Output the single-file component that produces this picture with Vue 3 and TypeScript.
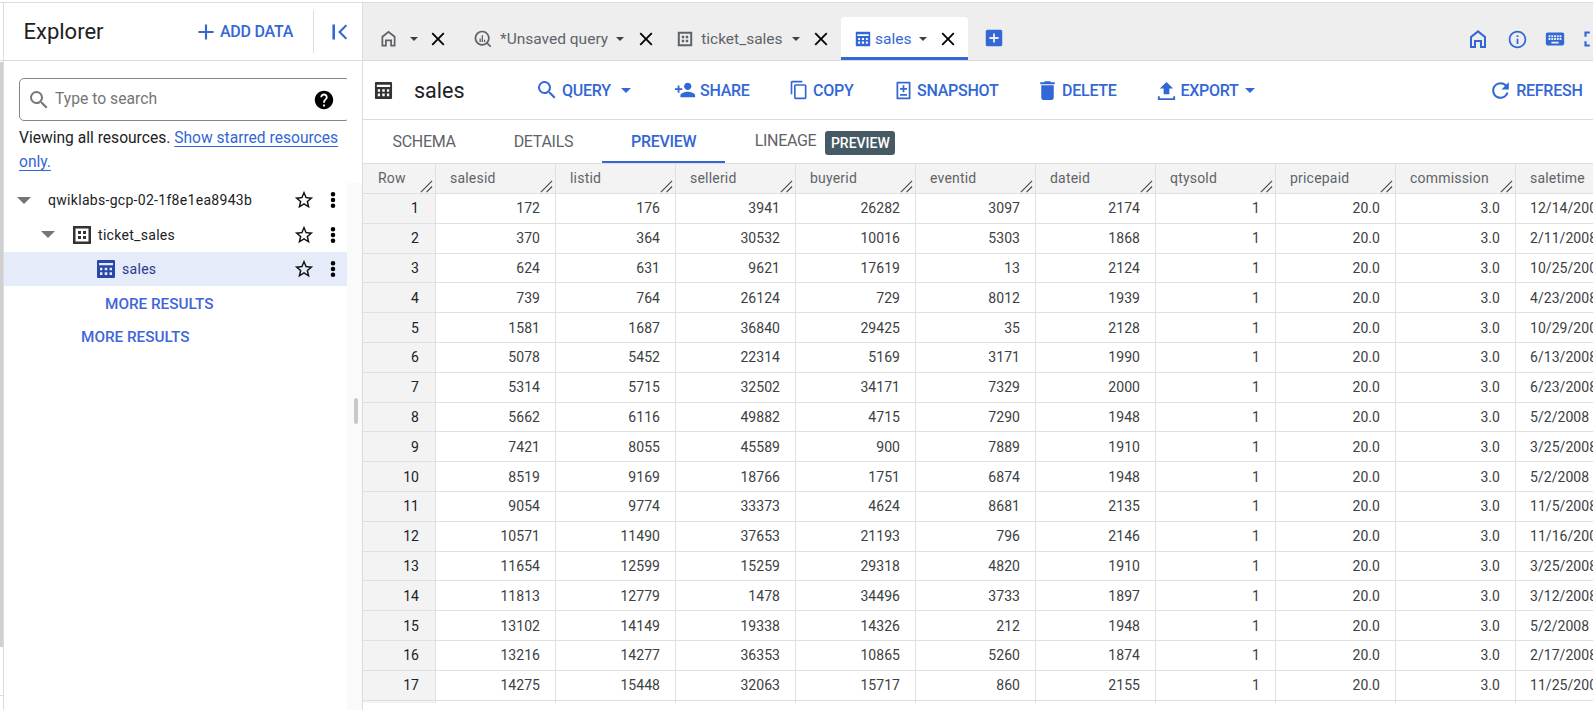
<template>
  <div class="page">
    <div class="shell">
      <div class="rail">
        <div class="rail-top"></div>
        <div class="rail-thumb"></div>
        <div class="rail-bottom"></div>
      </div>

      <aside class="explorer">
        <div class="explorer-head">
          <span class="explorer-title">Explorer</span>
          <button class="add-data">
            <svg width="26" height="26" viewBox="0 0 24 24"><path d="M19 13h-6v6h-2v-6H5v-2h6V5h2v6h6v2z" /></svg>
            ADD DATA
          </button>
          <span class="head-divider"></span>
          <button class="collapse">
            <svg width="26" height="26" viewBox="0 0 24 24"><path d="M5 5h2.400v14H5zM18.600 6.400 17.200 5l-7 7 7 7 1.400-1.400L13 12z" /></svg>
          </button>
        </div>

        <div class="explorer-body">
          <div class="search">
            <svg class="search-icon" width="24" height="24" viewBox="0 0 24 24"><path d="M15.500 14h-.79l-.28-.27A6.470 6.470 0 0 0 16 9.500 6.500 6.500 0 1 0 9.500 16c1.610 0 3.090-.59 4.230-1.570l.27.28v.79l5 4.990L20.490 19l-4.990-5zm-6 0C7.010 14 5 11.990 5 9.500S7.010 5 9.500 5 14 7.010 14 9.500 11.990 14 9.500 14z" /></svg>
            <span class="search-text">Type to search</span>
            <svg class="help-icon" width="22" height="22" viewBox="0 0 24 24"><path d="M12 2C6.480 2 2 6.480 2 12s4.480 10 10 10 10-4.480 10-10S17.520 2 12 2zm1 17h-2v-2h2v2zm2.070-7.750-.9.920C13.450 12.900 13 13.500 13 15h-2v-.5c0-1.100.45-2.100 1.170-2.830l1.240-1.260c.37-.36.59-.86.59-1.410 0-1.100-.9-2-2-2s-2 .9-2 2H8c0-2.210 1.790-4 4-4s4 1.790 4 4c0 .88-.36 1.680-.93 2.250z" /></svg>
          </div>
          <p class="viewing">Viewing all resources. <a class="starred">Show starred resources only.</a></p>
        </div>

        <div class="tree">
          <div class="tree-row">
            <span class="caret caret-project"></span>
            <span class="node-label project-label">qwiklabs-gcp-02-1f8e1ea8943b</span>
            <svg class="star" width="22" height="22" viewBox="0 0 24 24"><path :d="starPath" /></svg>
            <svg class="dots" width="24" height="24" viewBox="0 0 24 24"><path :d="dotsPath" /></svg>
          </div>
          <div class="tree-row">
            <span class="caret caret-dataset"></span>
            <svg class="dataset-icon" width="20" height="20" viewBox="0 0 20 20"><path :d="datasetPath" /></svg>
            <span class="node-label">ticket_sales</span>
            <svg class="star" width="22" height="22" viewBox="0 0 24 24"><path :d="starPath" /></svg>
            <svg class="dots" width="24" height="24" viewBox="0 0 24 24"><path :d="dotsPath" /></svg>
          </div>
          <div class="tree-row selected">
            <svg class="table-icon" width="20" height="20" viewBox="0 0 20 20"><path :d="tablePath" /></svg>
            <span class="node-label">sales</span>
            <svg class="star" width="22" height="22" viewBox="0 0 24 24"><path :d="starPath" /></svg>
            <svg class="dots" width="24" height="24" viewBox="0 0 24 24"><path :d="dotsPath" /></svg>
          </div>
          <div class="more more-inner">MORE RESULTS</div>
          <div class="more more-outer">MORE RESULTS</div>
        </div>
      </aside>

      <div class="gutter">
        <div class="gutter-head"></div>
        <div class="gutter-gap"></div>
        <div class="gutter-fill">
          <span class="handle"></span>
        </div>
      </div>

      <main class="main">
        <div class="tabbar">
          <div v-for="tab in tabs" :key="tab.key" class="tab" :class="[tab.key, { active: tab.active }]">
            <svg v-if="tab.key === 'home'" class="tab-icon" width="21" height="21" viewBox="0 0 24 24"><path :d="homePath" /></svg>
            <svg v-else-if="tab.key === 'query'" class="tab-icon" width="20" height="20" viewBox="0 0 24 24"><path d="M11 2a9 9 0 1 0 5.600 16l4 4 1.400-1.400-4-4A9 9 0 0 0 11 2zm0 2a7 7 0 1 1 0 14 7 7 0 0 1 0-14zm-.6 3.500v8h1.600v-8h-1.600zm-2.600 4v4h1.600v-4H7.800zm5.300 1.500v2.500h1.600V13h-1.600z" /></svg>
            <svg v-else-if="tab.key === 'dataset'" class="tab-icon" width="16" height="16" viewBox="0 0 20 20"><path :d="datasetPath" /></svg>
            <svg v-else class="tab-icon" width="16" height="16" viewBox="0 0 20 20"><path :d="tablePath" /></svg>
            <span v-if="tab.label" class="tab-label">{{ tab.label }}</span>
            <span class="tab-caret"></span>
            <svg class="tab-close" width="22" height="22" viewBox="0 0 24 24"><path d="M19 6.400 17.600 5 12 10.600 6.400 5 5 6.400 10.600 12 5 17.600 6.400 19 12 13.400 17.600 19 19 17.600 13.400 12z" /></svg>
          </div>
          <svg class="new-tab" width="22" height="22" viewBox="0 0 24 24"><path d="M19 3H5a2 2 0 0 0-2 2v14a2 2 0 0 0 2 2h14a2 2 0 0 0 2-2V5a2 2 0 0 0-2-2zm-2 10h-4v4h-2v-4H7v-2h4V7h2v4h4v2z" /></svg>
          <div class="tabbar-icons">
            <svg width="24" height="24" viewBox="0 0 24 24"><path :d="homePath" /></svg>
            <svg width="21" height="21" viewBox="0 0 24 24"><path d="M11 7h2v2h-2zm0 4h2v6h-2zm1-9C6.480 2 2 6.480 2 12s4.480 10 10 10 10-4.480 10-10S17.520 2 12 2zm0 18c-4.410 0-8-3.590-8-8s3.590-8 8-8 8 3.590 8 8-3.590 8-8 8z" /></svg>
            <svg width="22" height="22" viewBox="0 0 24 24"><path d="M20 5H4c-1.100 0-2 .9-2 2v10c0 1.100.9 2 2 2h16c1.100 0 2-.9 2-2V7c0-1.100-.9-2-2-2zm-9 3h2v2h-2V8zm0 3h2v2h-2v-2zM8 8h2v2H8V8zm0 3h2v2H8v-2zm-1 2H5v-2h2v2zm0-3H5V8h2v2zm9 7H8v-2h8v2zm0-4h-2v-2h2v2zm0-3h-2V8h2v2zm3 3h-2v-2h2v2zm0-3h-2V8h2v2z" /></svg>
            <svg width="26" height="26" viewBox="0 0 24 24"><path d="M7 14H5v5h5v-2H7v-3zm-2-4h2V7h3V5H5v5zm12 7h-3v2h5v-5h-2v3zM14 5v2h3v3h2V5h-5z" /></svg>
          </div>
        </div>

        <div class="toolbar">
          <svg class="title-icon" width="19" height="19" viewBox="0 0 20 20"><path :d="tablePath" /></svg>
          <span class="title">sales</span>
          <button v-for="action in actions" :key="action.label" class="action" :class="action.cls">
            <svg :width="action.size" :height="action.size" viewBox="0 0 24 24"><path :d="action.icon" /></svg>
            {{ action.label }}
            <span v-if="action.menu" class="action-caret"></span>
          </button>
          <button class="action refresh">
            <svg width="25" height="25" viewBox="0 0 24 24"><path d="M17.650 6.350A7.958 7.958 0 0 0 12 4c-4.420 0-7.990 3.580-7.990 8s3.570 8 7.990 8c3.730 0 6.840-2.550 7.730-6h-2.080A5.990 5.990 0 0 1 12 18c-3.310 0-6-2.690-6-6s2.690-6 6-6c1.660 0 3.140.69 4.220 1.780L13 11h7V4l-2.350 2.350z" /></svg>
            REFRESH
          </button>
        </div>

        <div class="subtabs">
          <span class="subtab schema">SCHEMA</span>
          <span class="subtab details">DETAILS</span>
          <span class="subtab preview">PREVIEW</span>
          <span class="subtab lineage">LINEAGE</span>
          <span class="badge">PREVIEW</span>
        </div>

        <div class="grid-wrap">
          <table class="grid">
            <thead>
              <tr>
                <th v-for="col in columns" :key="col" :class="{ 'row-col': col === 'Row' }">
                  {{ col }}
                  <svg class="resize" width="13" height="13" viewBox="0 0 14 14"><path d="M1 13 13 1M7 13l6-6" /></svg>
                </th>
              </tr>
            </thead>
            <tbody>
              <tr v-for="(row, i) in rows" :key="i">
                <td class="row-col">{{ i + 1 }}</td>
                <td v-for="(cell, j) in row" :key="j" :class="{ 'date-col': j === 9 }">{{ cell }}</td>
              </tr>
              <!-- next row, only its top few pixels are visible -->
              <tr>
                <td class="row-col"></td>
                <td v-for="n in 10" :key="n"></td>
              </tr>
            </tbody>
          </table>
        </div>
      </main>
    </div>
  </div>
</template>

<script setup lang="ts">
const starPath = 'M22 9.240l-7.190-.62L12 2 9.190 8.630 2 9.240l5.460 4.730L5.820 21 12 17.270 18.180 21l-1.630-7.030L22 9.240zM12 15.400l-3.760 2.270 1-4.280-3.320-2.880 4.380-.38L12 6.100l1.710 4.040 4.380.38-3.320 2.880 1 4.280L12 15.400z'
const dotsPath = 'M12 8.600a2.300 2.300 0 1 0 0-4.600 2.300 2.300 0 0 0 0 4.600zm0 1.100a2.300 2.300 0 1 0 0 4.600 2.300 2.300 0 0 0 0-4.600zm0 5.700a2.300 2.300 0 1 0 0 4.600 2.300 2.300 0 0 0 0-4.600z'
const datasetPath = 'M1 1h18v18H1V1zm2.500 2.500v13h13v-13h-13zM6 6h3v3H6V6zm5 0h3v3h-3V6zm-5 5h3v3H6v-3zm5 0h3v3h-3v-3z'
// frame, a white bar on top, then two rows of three cells
const tablePath = 'M2 1h16a1 1 0 0 1 1 1v16a1 1 0 0 1-1 1H2a1 1 0 0 1-1-1V2a1 1 0 0 1 1-1zm1 3v2.300h14V4H3zm1 4.700v2.600h2.400V8.700H4zm4.700 0v2.600h2.600V8.700H8.700zm4.900 0v2.600H16V8.700h-2.400zM4 13.200v2.800h2.400v-2.800H4zm4.700 0v2.800h2.600v-2.800H8.700zm4.900 0v2.800H16v-2.800h-2.400z'
const homePath = 'M12 3 4 9.500V21h6v-6h4v6h6V9.500L12 3zm6 16h-2v-6H8v6H6v-8.500l6-4.700 6 4.700V19z'

const tabs = [
  { key: 'home', label: '', active: false },
  { key: 'query', label: '*Unsaved query', active: false },
  { key: 'dataset', label: 'ticket_sales', active: false },
  { key: 'table', label: 'sales', active: true },
]

const actions = [
  { label: 'QUERY', cls: 'a-query', menu: true, size: 24, icon: 'M15.500 14h-.79l-.28-.27A6.470 6.470 0 0 0 16 9.500 6.500 6.500 0 1 0 9.500 16c1.610 0 3.090-.59 4.230-1.570l.27.28v.79l5 4.990L20.490 19l-4.990-5zm-6 0C7.010 14 5 11.990 5 9.500S7.010 5 9.500 5 14 7.010 14 9.500 11.990 14 9.500 14z' },
  { label: 'SHARE', cls: 'a-share', menu: false, size: 22, icon: 'M15 12c2.210 0 4-1.790 4-4s-1.790-4-4-4-4 1.790-4 4 1.790 4 4 4zm-9-2V7H4v3H1v2h3v3h2v-3h3v-2H6zm9 4c-2.670 0-8 1.340-8 4v2h16v-2c0-2.660-5.330-4-8-4z' },
  { label: 'COPY', cls: 'a-copy', menu: false, size: 20, icon: 'M16 1H4c-1.100 0-2 .9-2 2v14h2V3h12V1zm3 4H8c-1.100 0-2 .9-2 2v14c0 1.100.9 2 2 2h11c1.100 0 2-.9 2-2V7c0-1.100-.9-2-2-2zm0 16H8V7h11v14z' },
  { label: 'SNAPSHOT', cls: 'a-snapshot', menu: false, size: 21, icon: 'M5 2h14a1 1 0 0 1 1 1v18a1 1 0 0 1-1 1H5a1 1 0 0 1-1-1V3a1 1 0 0 1 1-1zm1 2v16h12V4H6zm5 2h2v3h3v2h-3v3h-2v-3H8V9h3V6zm-3 10h8v2H8v-2z' },
  { label: 'DELETE', cls: 'a-delete', menu: false, size: 25, icon: 'M6 19c0 1.100.9 2 2 2h8c1.100 0 2-.9 2-2V7H6v12zM19 4h-3.500l-1-1h-5l-1 1H5v2h14V4z' },
  { label: 'EXPORT', cls: 'a-export', menu: true, size: 23, icon: 'M9 16h6v-6h4l-7-7-7 7h4v6zm-6 2h2v2h14v-2h2v4H3v-4z' },
]

const columns = ['Row', 'salesid', 'listid', 'sellerid', 'buyerid', 'eventid', 'dateid', 'qtysold', 'pricepaid', 'commission', 'saletime']

// salesid, listid, sellerid, buyerid, eventid, dateid, then the saletime that gets clipped at the window edge
const rawRows: [number, number, number, number, number, number, string][] = [
  [172, 176, 3941, 26282, 3097, 2174, '12/14/2008'],
  [370, 364, 30532, 10016, 5303, 1868, '2/11/2008'],
  [624, 631, 9621, 17619, 13, 2124, '10/25/2008'],
  [739, 764, 26124, 729, 8012, 1939, '4/23/2008'],
  [1581, 1687, 36840, 29425, 35, 2128, '10/29/2008'],
  [5078, 5452, 22314, 5169, 3171, 1990, '6/13/2008'],
  [5314, 5715, 32502, 34171, 7329, 2000, '6/23/2008'],
  [5662, 6116, 49882, 4715, 7290, 1948, '5/2/2008'],
  [7421, 8055, 45589, 900, 7889, 1910, '3/25/2008'],
  [8519, 9169, 18766, 1751, 6874, 1948, '5/2/2008'],
  [9054, 9774, 33373, 4624, 8681, 2135, '11/5/2008'],
  [10571, 11490, 37653, 21193, 796, 2146, '11/16/2008'],
  [11654, 12599, 15259, 29318, 4820, 1910, '3/25/2008'],
  [11813, 12779, 1478, 34496, 3733, 1897, '3/12/2008'],
  [13102, 14149, 19338, 14326, 212, 1948, '5/2/2008'],
  [13216, 14277, 36353, 10865, 5260, 1874, '2/17/2008'],
  [14275, 15448, 32063, 15717, 860, 2155, '11/25/2008'],
]

const rows = rawRows.map((r) => [r[0], r[1], r[2], r[3], r[4], r[5], 1, '20.0', '3.0', r[6]])
</script>

<style>
html,
body {
  margin: 0;
  overflow: hidden;
  background: #fff;
}
</style>

<style scoped>
.page {
  width: 1593px;
  height: 710px;
  overflow: hidden;
  box-sizing: border-box;
  padding-top: 2px;
  font-family: Roboto, "Liberation Sans", sans-serif;
  color: #202124;
}

.shell {
  display: flex;
  height: 708px;
  box-sizing: border-box;
  border-top: 1px solid #dadce0;
}

button {
  font-family: inherit;
  border: none;
  background: none;
  padding: 0;
  display: inline-flex;
  align-items: center;
  flex-shrink: 0;
}

/* Browser scrollbar sliver on the far left */
.rail {
  width: 4px;
  flex-shrink: 0;
  box-sizing: border-box;
  border-right: 1px solid #dadce0;
}

.rail-top {
  height: 57px;
  border-bottom: 1px solid #dadce0;
}

.rail-thumb {
  height: 585px;
  margin-top: 1px;
  background: #d0d0d0;
}

.rail-bottom {
  margin-top: 48px;
  border-top: 1px solid #dadce0;
}

/* Explorer panel */
.explorer {
  width: 343px;
  flex-shrink: 0;
  overflow: hidden;
}

.explorer-head {
  height: 57px;
  display: flex;
  align-items: center;
  padding-left: 19.500px;
  border-bottom: 1px solid #dadce0;
}

.explorer-title {
  font-size: 22px;
  width: 169px;
  flex-shrink: 0;
}

.add-data {
  color: #3367d6;
  font-size: 16px;
  font-weight: 500;
  letter-spacing: -0.25px;
  gap: 1.500px;
  width: 120.400px;
}

.add-data svg,
.collapse svg {
  fill: #3367d6;
}

.head-divider {
  width: 1px;
  height: 43px;
  background: #dadce0;
  flex-shrink: 0;
}

.collapse {
  margin-left: 13.600px;
}

.explorer-body {
  padding: 17px 0 0 15px;
}

.search {
  height: 43px;
  display: flex;
  align-items: center;
  border: 1px solid #80868b;
  border-radius: 5px;
  box-sizing: border-box;
  margin-right: -3px;
  padding-left: 7px;
}

.search-icon {
  fill: #757575;
  flex-shrink: 0;
}

.search-text {
  margin-left: 4px;
  margin-bottom: 2px;
  font-size: 15.700px;
  color: #757575;
  flex: 1;
}

.help-icon {
  fill: #000;
  margin-right: 14px;
}

.viewing {
  margin: 5px 0 0;
  font-size: 15.600px;
  line-height: 24px;
  width: 326px;
}

.starred {
  color: #3367d6;
  text-decoration: underline;
  text-underline-offset: 3px;
}

.tree {
  margin-top: 9px;
}

.tree-row {
  height: 34.400px;
  display: flex;
  align-items: center;
  font-size: 14px;
  letter-spacing: 0.3px;
}

.tree-row.selected {
  background: #e5ebf8;
  color: #2a3a8c;
}

.node-label {
  flex: 1;
}

.project-label {
  margin-left: 17px;
}

.caret {
  width: 0;
  height: 0;
  border-left: 7px solid transparent;
  border-right: 7px solid transparent;
  border-top: 7px solid #757575;
  flex-shrink: 0;
}

.caret-project {
  margin-left: 13px;
}

.caret-dataset {
  margin-left: 37px;
}

.dataset-icon {
  margin-left: 17px;
  margin-right: 6px;
  fill: #333;
}

.table-icon {
  fill: #2a46ab;
  margin-left: 92px;
  margin-right: 6px;
}

.star {
  fill: #111;
  margin-right: 6.500px;
}

.dots {
  fill: #000;
  margin-right: 2px;
}

.more {
  color: #3f66d8;
  font-size: 15.300px;
  font-weight: 500;
  height: 32px;
  line-height: 32px;
}

.more-inner {
  margin-left: 101px;
  margin-top: 2px;
}

.more-outer {
  margin-left: 77px;
  margin-top: 1px;
}

/* Gutter between the panels */
.gutter {
  width: 15px;
  flex-shrink: 0;
  display: flex;
  flex-direction: column;
}

.gutter-head {
  height: 57px;
  flex-shrink: 0;
  border-bottom: 1px solid #dadce0;
}

.gutter-gap {
  height: 122px;
  flex-shrink: 0;
}

.gutter-fill {
  flex: 1;
  background: #fafafa;
  position: relative;
}

.handle {
  position: absolute;
  left: 7px;
  top: 215px;
  width: 4px;
  height: 26px;
  border-radius: 2px;
  background: #c8c8c8;
}

/* Main column */
.main {
  flex: 1;
  min-width: 0;
  display: flex;
  flex-direction: column;
  border-left: 1px solid #dadce0;
}

.tabbar {
  height: 57px;
  flex-shrink: 0;
  background: #eeeeee;
  border-bottom: 1px solid #dadce0;
  display: flex;
  align-items: flex-end;
}

.tab {
  height: 43px;
  display: flex;
  align-items: center;
  box-sizing: border-box;
  color: #5f6368;
  font-size: 15.500px;
  flex-shrink: 0;
}

.tab.home {
  width: 97px;
  padding-left: 14.500px;
}

.tab.query {
  width: 205px;
  padding-left: 13.300px;
}

.tab.dataset {
  width: 176px;
  padding-left: 12.200px;
}

.tab.table {
  width: 127px;
  padding-left: 14px;
}

.tab.active {
  background: #fff;
  color: #3367d6;
  border-bottom: 3px solid #3367d6;
  border-radius: 4px 4px 0 0;
  padding-top: 3px;
}

.tab-icon {
  fill: #5f6368;
  flex-shrink: 0;
}

.tab.active .tab-icon {
  fill: #3367d6;
}

.tab-label {
  margin-left: 4px;
}

.tab.query .tab-label {
  margin-left: 6.700px;
}

.tab.dataset .tab-label {
  margin-left: 8px;
}

.tab-caret {
  width: 0;
  height: 0;
  border-left: 4px solid transparent;
  border-right: 4px solid transparent;
  border-top: 4px solid #3c4043;
  margin-left: 8px;
}

.tab.home .tab-caret {
  margin-left: 11.500px;
}

.tab.dataset .tab-caret {
  margin-left: 9px;
}

.tab-close {
  fill: #000;
  margin-left: 10px;
  flex-shrink: 0;
}

.tab.home .tab-close {
  margin-left: 9px;
}

.tab.query .tab-close {
  margin-left: 11px;
}

.new-tab {
  fill: #3367d6;
  margin-left: 15.250px;
  margin-bottom: 11px;
  flex-shrink: 0;
}

.tabbar-icons {
  margin-left: auto;
  margin-right: -12px;
  margin-bottom: 8px;
  display: flex;
  align-items: center;
  gap: 16px;
  fill: #3367d6;
  flex-shrink: 0;
}

.tabbar-icons svg:first-child {
  margin-right: 1px;
}

.tabbar-icons svg:last-child {
  margin-left: -3px;
}

.toolbar {
  height: 58px;
  flex-shrink: 0;
  display: flex;
  align-items: center;
  border-bottom: 1px solid #dadce0;
  padding: 0 10.500px 0 11px;
}

.title-icon {
  fill: #333;
  flex-shrink: 0;
}

.title {
  font-size: 21.500px;
  margin-left: 21px;
  width: 121px;
  flex-shrink: 0;
}

.action {
  color: #3367d6;
  fill: #3367d6;
  font-size: 16px;
  font-weight: 500;
  letter-spacing: -0.25px;
  white-space: nowrap;
}

.a-query {
  width: 139px;
  gap: 3px;
}

.a-query .action-caret {
  margin-left: 7.500px;
}

.a-share {
  width: 115px;
  gap: 4px;
}

.a-copy {
  width: 103.500px;
  gap: 4px;
}

.a-snapshot {
  width: 142.500px;
  gap: 3.500px;
}

.a-delete {
  width: 120.400px;
  gap: 2px;
}

.a-export {
  gap: 2px;
}

.action-caret {
  width: 0;
  height: 0;
  border-left: 5px solid transparent;
  border-right: 5px solid transparent;
  border-top: 5px solid #3367d6;
  margin-left: 4px;
}

.refresh {
  margin-left: auto;
  gap: 3px;
}

.subtabs {
  height: 43px;
  flex-shrink: 0;
  display: flex;
  align-items: center;
  font-size: 16px;
  letter-spacing: -0.3px;
  color: #5f6368;
}

.subtab {
  flex-shrink: 0;
}

.schema {
  margin-left: 29.500px;
}

.details {
  margin-left: 58px;
}

.preview {
  margin-left: 29px;
  width: 123px;
  text-align: center;
  height: 43px;
  line-height: 43px;
  box-sizing: border-box;
  color: #3367d6;
  font-weight: 500;
  border-bottom: 2px solid #3367d6;
}

.lineage {
  margin-left: 29.500px;
  margin-bottom: 2px;
}

.badge {
  margin-left: 9px;
  background: #455a64;
  color: #fff;
  font-size: 14px;
  font-weight: 500;
  letter-spacing: 0;
  padding: 0 5.500px;
  height: 24px;
  line-height: 24px;
  border-radius: 3px;
  margin-top: 2px;
  flex-shrink: 0;
}

/* Results grid */
.grid-wrap {
  height: 540px;
  flex-shrink: 0;
  overflow: hidden;
}

.grid {
  border-collapse: collapse;
  table-layout: fixed;
  width: 1273px;
  margin-left: -1px;
  font-size: 14px;
}

.grid th {
  width: 120px;
  height: 30px;
  box-sizing: border-box;
  background: #f3f3f3;
  border: 1px solid #e0e0e0;
  text-align: left;
  vertical-align: top;
  padding: 6px 0 0 14px;
  font-weight: 400;
  letter-spacing: 0.2px;
  color: #5f6368;
  position: relative;
}

.grid th.row-col {
  width: 73px;
  padding-left: 15px;
}

.resize {
  position: absolute;
  right: 2px;
  bottom: 0;
  fill: none;
  stroke: #444;
  stroke-width: 1.200;
}

.grid td {
  height: 29.800px;
  box-sizing: border-box;
  border: 1px solid #e0e0e0;
  text-align: right;
  padding: 0 15px 0 0;
  letter-spacing: 0.05px;
  color: #3c4043;
  white-space: nowrap;
  overflow: hidden;
}

.grid td.row-col {
  background: #f3f3f3;
  color: #202124;
  padding-right: 16px;
}

.grid td.date-col {
  text-align: left;
  padding: 0 0 0 14px;
}
</style>
